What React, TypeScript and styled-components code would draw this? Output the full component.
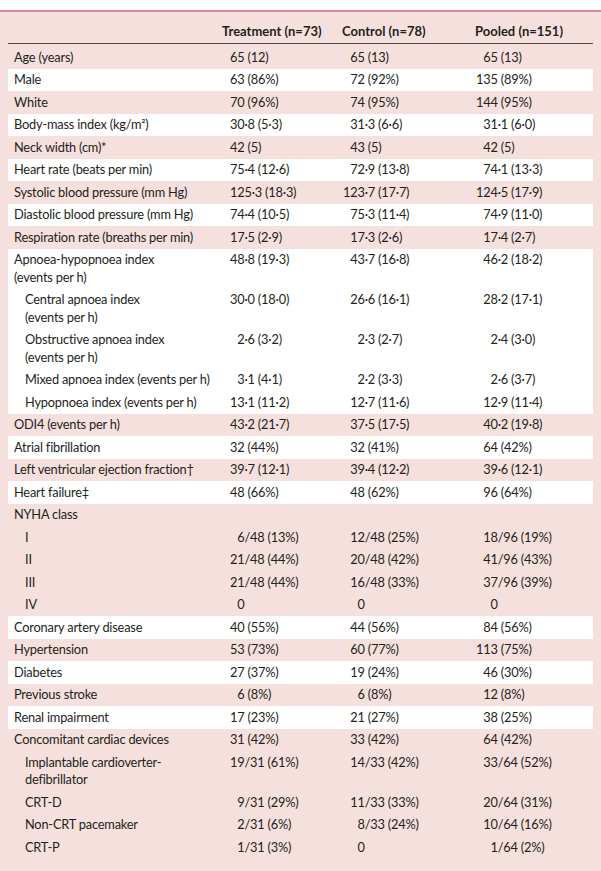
import styled, { createGlobalStyle } from "styled-components";

const F = "\u2007";

const GlobalStyle = createGlobalStyle`
  html, body {
    margin: 0;
    padding: 0;
  }
  body {
    background: #f5e0dd;
    font-family: Lato, "Open Sans", sans-serif;
    color: #231f20;
  }
`;

const Page = styled.div`
  width: 601px;
  min-height: 871px;
  background: #f5e0dd;
`;

const TopBand = styled.div`
  height: 10px;
  background: #ffffff;
  border-bottom: 2px solid #d98799;
`;

const Table = styled.div`
  margin: 0 8px;
  font-size: 12.8px;
  letter-spacing: -0.2px;
`;

const HeaderRow = styled.div`
  display: grid;
  grid-template-columns: 214px 120px 133px 118px;
  padding: 10.5px 0 3.5px;
  margin-bottom: 2px;
  border-bottom: 1px solid #4d4d4d;
  font-size: 13px;
  font-weight: 700;
  letter-spacing: 0;
  line-height: 17px;
`;

const Group = styled.div<{ $white: boolean }>`
  background: ${(p) => (p.$white ? "#ffffff" : "transparent")};
`;

const Row = styled.div`
  display: grid;
  grid-template-columns: 214px 120px 133px 118px;
  padding: 2.5px 0;
  line-height: 17.5px;
`;

const Label = styled.div<{ $sub?: boolean }>`
  padding-left: ${(p) => (p.$sub ? "17px" : "6px")};
  white-space: pre-line;
`;

const Value = styled.div<{ $pad: number }>`
  padding-left: ${(p) => p.$pad}px;
  white-space: pre;
`;

type Line = { label: string; values: [string, string, string]; sub?: boolean };

const groups: Line[][] = [
  [{ label: "Age (years)", values: ["65 (12)", `${F}65 (13)`, `${F}65 (13)`] }],
  [{ label: "Male", values: ["63 (86%)", `${F}72 (92%)`, "135 (89%)"] }],
  [{ label: "White", values: ["70 (96%)", `${F}74 (95%)`, "144 (95%)"] }],
  [{ label: "Body-mass index (kg/m²)", values: ["30·8 (5·3)", `${F}31·3 (6·6)`, `${F}31·1 (6·0)`] }],
  [{ label: "Neck width (cm)*", values: ["42 (5)", `${F}43 (5)`, `${F}42 (5)`] }],
  [{ label: "Heart rate (beats per min)", values: ["75·4 (12·6)", `${F}72·9 (13·8)`, `${F}74·1 (13·3)`] }],
  [{ label: "Systolic blood pressure (mm Hg)", values: ["125·3 (18·3)", "123·7 (17·7)", "124·5 (17·9)"] }],
  [{ label: "Diastolic blood pressure (mm Hg)", values: ["74·4 (10·5)", `${F}75·3 (11·4)`, `${F}74·9 (11·0)`] }],
  [{ label: "Respiration rate (breaths per min)", values: ["17·5 (2·9)", `${F}17·3 (2·6)`, `${F}17·4 (2·7)`] }],
  [
    { label: "Apnoea-hypopnoea index\n(events per h)", values: ["48·8 (19·3)", `${F}43·7 (16·8)`, `${F}46·2 (18·2)`] },
    { label: "Central apnoea index\n(events per h)", values: ["30·0 (18·0)", `${F}26·6 (16·1)`, `${F}28·2 (17·1)`], sub: true },
    { label: "Obstructive apnoea index\n(events per h)", values: [`${F}2·6 (3·2)`, `${F}${F}2·3 (2·7)`, `${F}${F}2·4 (3·0)`], sub: true },
    { label: "Mixed apnoea index (events per h)", values: [`${F}3·1 (4·1)`, `${F}${F}2·2 (3·3)`, `${F}${F}2·6 (3·7)`], sub: true },
    { label: "Hypopnoea index (events per h)", values: ["13·1 (11·2)", `${F}12·7 (11·6)`, `${F}12·9 (11·4)`], sub: true },
  ],
  [{ label: "ODI4 (events per h)", values: ["43·2 (21·7)", `${F}37·5 (17·5)`, `${F}40·2 (19·8)`] }],
  [{ label: "Atrial fibrillation", values: ["32 (44%)", `${F}32 (41%)`, `${F}64 (42%)`] }],
  [{ label: "Left ventricular ejection fraction†", values: ["39·7 (12·1)", `${F}39·4 (12·2)`, `${F}39·6 (12·1)`] }],
  [{ label: "Heart failure‡", values: ["48 (66%)", `${F}48 (62%)`, `${F}96 (64%)`] }],
  [
    { label: "NYHA class", values: ["", "", ""] },
    { label: "I", values: [`${F}6/48 (13%)`, `${F}12/48 (25%)`, `${F}18/96 (19%)`], sub: true },
    { label: "II", values: ["21/48 (44%)", `${F}20/48 (42%)`, `${F}41/96 (43%)`], sub: true },
    { label: "III", values: ["21/48 (44%)", `${F}16/48 (33%)`, `${F}37/96 (39%)`], sub: true },
    { label: "IV", values: [`${F}0`, `${F}${F}0`, `${F}${F}0`], sub: true },
  ],
  [{ label: "Coronary artery disease", values: ["40 (55%)", `${F}44 (56%)`, `${F}84 (56%)`] }],
  [{ label: "Hypertension", values: ["53 (73%)", `${F}60 (77%)`, "113 (75%)"] }],
  [{ label: "Diabetes", values: ["27 (37%)", `${F}19 (24%)`, `${F}46 (30%)`] }],
  [{ label: "Previous stroke", values: [`${F}6 (8%)`, `${F}${F}6 (8%)`, `${F}12 (8%)`] }],
  [{ label: "Renal impairment", values: ["17 (23%)", `${F}21 (27%)`, `${F}38 (25%)`] }],
  [
    { label: "Concomitant cardiac devices", values: ["31 (42%)", `${F}33 (42%)`, `${F}64 (42%)`] },
    { label: "Implantable cardioverter-\ndefibrillator", values: ["19/31 (61%)", `${F}14/33 (42%)`, `${F}33/64 (52%)`], sub: true },
    { label: "CRT-D", values: [`${F}9/31 (29%)`, `${F}11/33 (33%)`, `${F}20/64 (31%)`], sub: true },
    { label: "Non-CRT pacemaker", values: [`${F}2/31 (6%)`, `${F}${F}8/33 (24%)`, `${F}10/64 (16%)`], sub: true },
    { label: "CRT-P", values: [`${F}1/31 (3%)`, `${F}${F}0`, `${F}${F}1/64 (2%)`], sub: true },
  ],
];

const pads = [8, 1, 1];

export default function App() {
  return (
    <Page>
      <GlobalStyle />
      <TopBand />
      <Table>
        <HeaderRow>
          <div />
          <div>Treatment (n=73)</div>
          <div>Control (n=78)</div>
          <div>Pooled (n=151)</div>
        </HeaderRow>
        {groups.map((lines, gi) => (
          <Group key={gi} $white={gi % 2 === 1}>
            {lines.map((line, li) => (
              <Row key={li}>
                <Label $sub={line.sub}>{line.label}</Label>
                {line.values.map((v, vi) => (
                  <Value key={vi} $pad={pads[vi]}>
                    {v}
                  </Value>
                ))}
              </Row>
            ))}
          </Group>
        ))}
      </Table>
    </Page>
  );
}
